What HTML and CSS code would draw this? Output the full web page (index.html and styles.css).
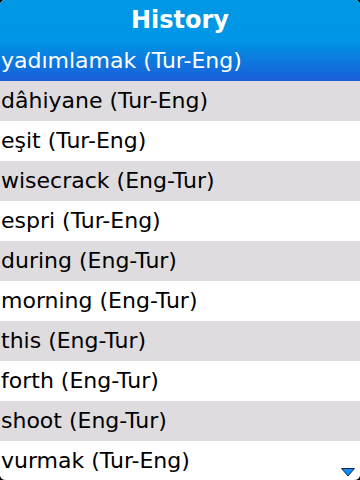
FILE: index.html
```html
<!DOCTYPE html>
<html lang="en">
<head>
  <meta charset="UTF-8" />
  <title>History</title>
  <link rel="stylesheet" href="styles.css">
</head>
<body>
  <div class="screen">
    <h1 class="title">History</h1>
    <ul class="list">
      <li class="sel">yadımlamak (Tur-Eng)</li>
      <li>dâhiyane (Tur-Eng)</li>
      <li>eşit (Tur-Eng)</li>
      <li>wisecrack (Eng-Tur)</li>
      <li>espri (Tur-Eng)</li>
      <li>during (Eng-Tur)</li>
      <li>morning (Eng-Tur)</li>
      <li>this (Eng-Tur)</li>
      <li>forth (Eng-Tur)</li>
      <li>shoot (Eng-Tur)</li>
      <li>vurmak (Tur-Eng)</li>
    </ul>
    <svg class="more" width="14" height="9" viewBox="0 0 14 9">
      <path d="M0.5 0.5 L13.5 0.5 L7 8 Z" fill="#1a8cf0" stroke="#0a2a55" stroke-width="1"/>
    </svg>
  </div>
</body>
</html>
```

FILE: styles.css
```css
html, body {
  margin: 0;
  background: #000;
}
.screen {
  position: relative;
  width: 360px;
  height: 480px;
  overflow: hidden;
  border-radius: 5px;
  background: #fff;
  font-family: "DejaVu Sans", sans-serif;
}
.title {
  margin: 0;
  height: 41px;
  line-height: 41px;
  text-align: center;
  font-size: 24px;
  font-weight: bold;
  color: #fff;
  background: linear-gradient(#0098e4, #0096e8);
}
.list {
  list-style: none;
  margin: 0;
  padding: 0;
}
.list li {
  height: 40px;
  line-height: 40px;
  padding-left: 1px;
  font-size: 22px;
  color: #000;
  white-space: nowrap;
}
.list li:nth-child(even) {
  background: #dedcdf;
}
.list li.sel {
  color: #fff;
  background: linear-gradient(#0094e6, #1a5ed8);
}
.more {
  position: absolute;
  right: 5px;
  bottom: 3px;
}
```
